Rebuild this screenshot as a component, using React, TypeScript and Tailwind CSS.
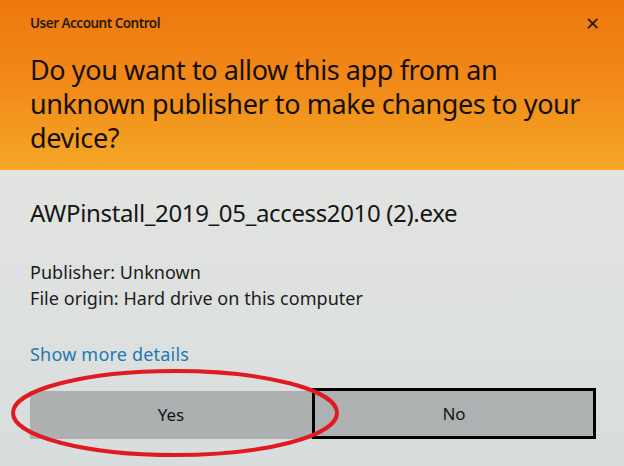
import React from 'react';

const font = { fontFamily: '"Noto Sans", "Open Sans", Arial, sans-serif' };

function App() {
    return (
        <div className="relative w-[624px] h-[466px] overflow-hidden flex flex-col bg-[#dcdfde] text-[#1a1a1a]" style={font}>
            <div className="h-[170px] px-[30px] bg-gradient-to-b from-[#ee780e] via-[#f18a18] to-[#f4a826]">
                <div className="flex items-center justify-between pt-[10px] h-[36px]">
                    <span className="text-[13.5px] font-semibold tracking-[-0.5px] text-[#2a1a0a]">User Account Control</span>
                    <span className="text-[18px] leading-none text-[#2e1a0c] -mr-[6px]">✕</span>
                </div>
                <h1 className="mt-[17px] text-[27px] leading-[34px] tracking-[-0.4px] text-[#161008] w-[580px]">
                    Do you want to allow this app from an unknown publisher to make changes to your device?
                </h1>
            </div>
            <div className="flex-1 px-[30px] pt-[28px] bg-gradient-to-b from-[#e2e4e1] to-[#d8dddd]">
                <div className="text-[24px] tracking-[-0.35px] leading-[30px] text-[#161616]">AWPinstall_2019_05_access2010 (2).exe</div>
                <div className="mt-[31px] text-[18px] leading-[26px] tracking-[0.05px] text-[#1c1c1c]">
                    <div>Publisher: Unknown</div>
                    <div>File origin: Hard drive on this computer</div>
                </div>
                <div className="mt-[31px] text-[18px] leading-[24px] tracking-[0.2px] text-[#1e7ab0]">Show more details</div>
                <div className="mt-[22px] flex items-end w-[566px]">
                    <div className="w-[282px] h-[48px] bg-[#adb0b0] flex items-center justify-center text-[17px] text-[#161616]">Yes</div>
                    <div className="w-[284px] h-[51px] border-[3px] border-black bg-[#aeb1b1] flex items-center justify-center text-[17px] text-[#161616]">No</div>
                </div>
            </div>
            <svg className="absolute left-0 top-0 pointer-events-none" width="624" height="466">
                <ellipse cx="175" cy="413" rx="162" ry="42" fill="none" stroke="#e01a20" strokeWidth="4" />
            </svg>
        </div>
    )
}

export default App
